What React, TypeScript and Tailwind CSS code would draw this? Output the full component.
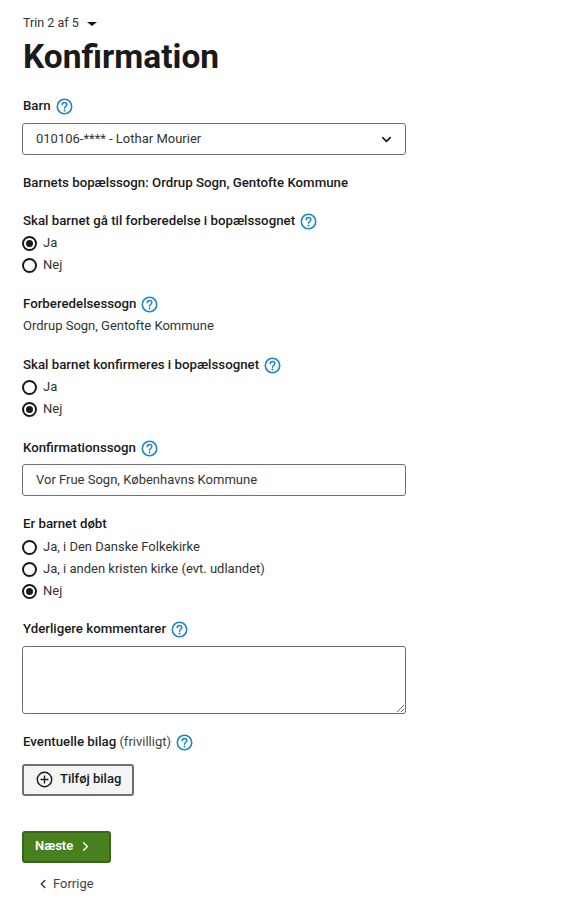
import { ChevronDown, ChevronLeft, ChevronRight } from 'lucide-react';

const Help = () => (
  <svg width="17" height="17" viewBox="0 0 17 17" fill="none" className="shrink-0">
    <circle cx="8.5" cy="8.5" r="7.2" stroke="#1b86c4" strokeWidth="1.6" />
    <path d="M6.2 6.7c0-1.4 1-2.3 2.3-2.3s2.3.9 2.3 2.1c0 1-.5 1.5-1.2 2-.7.5-1.1.9-1.1 1.8" stroke="#1b86c4" strokeWidth="1.5" strokeLinecap="round" />
    <circle cx="8.5" cy="12.5" r="1" fill="#1b86c4" />
  </svg>
);

const Label = ({ text, extra }: { text: string; extra?: string }) => (
  <div className="flex items-center gap-[5px] h-[22px] pl-px text-[13.25px] font-medium text-[#1a1a1a]">
    <span className="pb-px">
      {text}
      {extra && <span className="font-normal text-[13px] text-[#444]"> {extra}</span>}
    </span>
    <Help />
  </div>
);

const Radio = ({ text, checked }: { text: string; checked?: boolean }) => (
  <label className="flex items-center gap-[6px] h-[22px] text-[13px] text-[#333]">
    <span className="w-[15px] h-[15px] rounded-full border-2 border-[#1a1a1a] flex items-center justify-center">
      {checked && <span className="w-[7px] h-[7px] rounded-full bg-[#1a1a1a]" />}
    </span>
    <span className="pb-px">{text}</span>
  </label>
);

export default function App() {
  return (
    <div className='font-["Roboto",sans-serif] min-h-[911px] bg-white pl-[22px] pt-[12px] text-[#1a1a1a]'>
      <div className="flex items-center h-[22px] pl-px text-[12.5px] text-[#333]">
        Trin 2 af 5
        <span className="ml-[8px] mt-[2px] w-0 h-0 border-x-[5px] border-x-transparent border-t-[4px] border-t-[#1a1a1a]" />
      </div>
      <h1 className="mt-px h-[44px] pl-px leading-[44px] text-[33.5px] font-bold text-[#1a1a1a]">Konfirmation</h1>

      <div className="mt-[16px]">
        <Label text="Barn" />
      </div>
      <div className="mt-[6px] w-[384px] h-[32px] rounded-[3px] border border-[#6f6f6f] flex items-center justify-between pl-[13px] pr-[11px] text-[13px] text-[#333]">
        <span className="pb-px">010106-**** - Lothar Mourier</span>
        <ChevronDown size={15} strokeWidth={2.6} className="text-[#1a1a1a]" />
      </div>

      <div className="mt-[17px] h-[22px] pl-px flex items-center text-[13.25px] font-medium">Barnets bopælssogn: Ordrup Sogn, Gentofte Kommune</div>

      <div className="mt-[16px]">
        <Label text="Skal barnet gå til forberedelse i bopælssognet" />
        <Radio text="Ja" checked />
        <Radio text="Nej" />
      </div>

      <div className="mt-[17px]">
        <Label text="Forberedelsessogn" />
        <div className="h-[22px] pl-px flex items-center text-[13px] text-[#333]">Ordrup Sogn, Gentofte Kommune</div>
      </div>

      <div className="mt-[17px]">
        <Label text="Skal barnet konfirmeres i bopælssognet" />
        <Radio text="Ja" />
        <Radio text="Nej" checked />
      </div>

      <div className="mt-[17px]">
        <Label text="Konfirmationssogn" />
      </div>
      <div className="mt-[5px] w-[384px] h-[32px] rounded-[3px] border border-[#6f6f6f] flex items-center pl-[13px] text-[13px] text-[#333]">
        <span className="pb-px">Vor Frue Sogn, Københavns Kommune</span>
      </div>

      <div className="mt-[17px]">
        <div className="h-[22px] pl-px pb-px flex items-center text-[13.25px] font-medium">Er barnet døbt</div>
        <div className="pt-px">
          <Radio text="Ja, i Den Danske Folkekirke" />
          <Radio text="Ja, i anden kristen kirke (evt. udlandet)" />
          <Radio text="Nej" checked />
        </div>
      </div>

      <div className="mt-[16px]">
        <Label text="Yderligere kommentarer" />
      </div>
      <textarea className="block mt-[6px] w-[384px] h-[68px] rounded-[3px] border border-[#6f6f6f] bg-white" />

      <div className="mt-[17px]">
        <Label text="Eventuelle bilag" extra="(frivilligt)" />
      </div>
      <button className="mt-[11px] w-[112px] h-[32px] rounded-[3px] border-2 border-[#6f6f6f] bg-[#f4f4f4] flex items-center pl-[12px] gap-[7px] text-[13px] font-medium">
        <svg width="17" height="17" viewBox="0 0 17 17" fill="none" className="-mt-px">
          <circle cx="8.5" cy="8.5" r="7.2" stroke="#1a1a1a" strokeWidth="1.4" />
          <path d="M8.5 4.6v7.8M4.6 8.5h7.8" stroke="#1a1a1a" strokeWidth="1.3" />
        </svg>
        <span className="pb-[2px]">Tilføj bilag</span>
      </button>

      <button className="mt-[35px] w-[89px] h-[32px] rounded-[3px] border-2 border-[#38661a] bg-[#46811e] flex items-center pl-[11px] gap-[5px] text-[13px] font-semibold text-white">
        <span className="pb-[2px]">Næste</span>
        <ChevronRight size={15} strokeWidth={2.4} className="-mt-px" />
      </button>
      <div className="mt-[10px] ml-[14px] h-[22px] flex items-center gap-[3px] text-[13px] text-[#444]">
        <ChevronLeft size={14} strokeWidth={2.4} className="text-[#333]" />
        <span className="pb-px">Forrige</span>
      </div>
    </div>
  );
}
